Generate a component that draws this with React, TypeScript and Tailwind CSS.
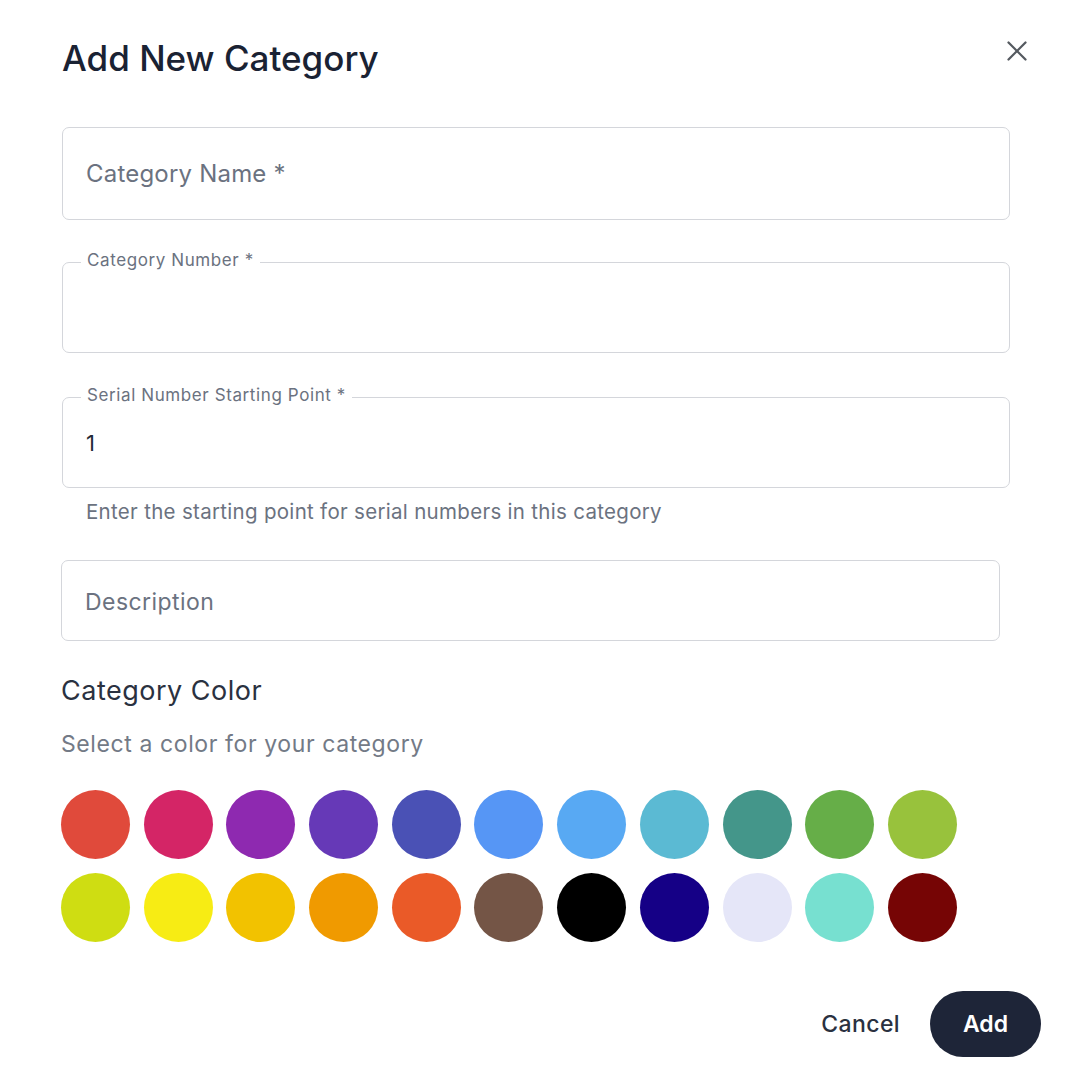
import { X } from "lucide-react";

const colors = [
  "#e04a3b", "#d42566", "#8e29b0", "#6639b7", "#4a51b5", "#5696f5",
  "#58a9f3", "#5bbad3", "#44968a", "#66ae48", "#98c23c",
  "#cfdd12", "#f7ec14", "#f2c200", "#f09a00", "#ea5a28", "#745546",
  "#000000", "#150086", "#e5e6f8", "#77e0d0", "#760505",
];

function OutlinedField({ label, value }: { label: string; value?: string }) {
  return (
    <div className="relative h-[91px] w-[948px] rounded-[7px] border border-[#d4d6db]">
      <span className="absolute -top-[15px] left-[18px] bg-white px-[6px] text-[17px] leading-[24px] tracking-[0.6px] text-[#6b7280]">
        {label}
      </span>
      <div className="flex h-full items-center pl-[23px] pt-[2px] text-[22px] text-[#1f2937]">{value}</div>
    </div>
  );
}

export default function App() {
  return (
    <div className="h-[1080px] w-[1080px] bg-white pl-[62px] pt-[37px] font-['Inter',sans-serif]">
      <div className="flex w-[972px] items-start justify-between">
        <h1 className="text-[35px] font-medium leading-[42px] text-[#1a2233]">Add New Category</h1>
        <button className="mt-[-3px] text-[#555a60]">
          <X className="h-[34px] w-[34px]" strokeWidth={1.6} />
        </button>
      </div>

      <div className="mt-[48px] flex h-[93px] w-[948px] items-center rounded-[7px] border border-[#d4d6db] pl-[23px] text-[24px] tracking-[0.2px] text-[#6b7280]">
        Category Name *
      </div>

      <div className="mt-[42px]">
        <OutlinedField label="Category Number *" />
      </div>

      <div className="mt-[44px]">
        <OutlinedField label="Serial Number Starting Point *" value="1" />
      </div>
      <p className="mt-[11px] pl-[24px] text-[20.5px] leading-[26px] tracking-[0.3px] text-[#6b7280]">
        Enter the starting point for serial numbers in this category
      </p>

      <div className="mt-[35px] -ml-px flex h-[81px] w-[939px] items-center rounded-[7px] border border-[#d4d6db] pl-[23px] pt-[4px] text-[23px] tracking-[0.45px] text-[#6b7280]">
        Description
      </div>

      <h2 className="mt-[34px] -ml-px text-[27px] leading-[32px] tracking-[0.5px] text-[#2a3140]">Category Color</h2>
      <p className="mt-[22px] -ml-px text-[23px] leading-[30px] tracking-[0.6px] text-[#737a86]">Select a color for your category</p>

      <div className="mt-[31px] -ml-px grid w-[900px] grid-cols-[repeat(11,69px)] gap-x-[13.7px] gap-y-[14px]">
        {colors.map((c) => (
          <div key={c} className="h-[69px] w-[69px] rounded-full" style={{ backgroundColor: c }} />
        ))}
      </div>

      <div className="mt-[49px] flex w-[979px] items-center justify-end gap-[30px]">
        <button className="text-[23px] font-medium tracking-[0.4px] text-[#2a3140]">Cancel</button>
        <button className="h-[66px] w-[111px] rounded-full bg-[#1e2538] text-[23px] font-semibold text-white">Add</button>
      </div>
    </div>
  );
}
